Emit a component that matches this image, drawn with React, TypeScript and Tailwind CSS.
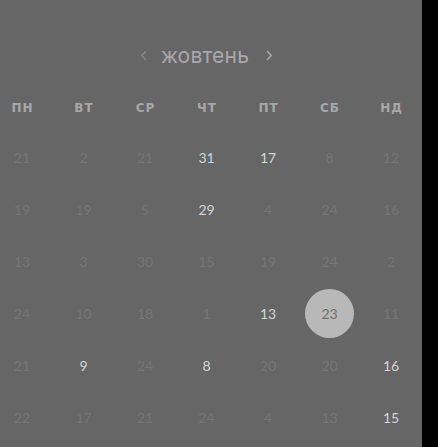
import React from "react";

type Day = { n: number; bright?: boolean; selected?: boolean };

const weekdays = ["пн", "вт", "ср", "чт", "пт", "сб", "нд"];

const d = (n: number, bright = false, selected = false): Day => ({ n, bright, selected });

const rows: Day[][] = [
  [d(21), d(2), d(21), d(31, true), d(17, true), d(8), d(12)],
  [d(19), d(19), d(5), d(29, true), d(4), d(24), d(16)],
  [d(13), d(3), d(30), d(15), d(19), d(24), d(2)],
  [d(24), d(10), d(18), d(1), d(13, true), d(23, false, true), d(11)],
  [d(21), d(9, true), d(24), d(8, true), d(20), d(20), d(16, true)],
  [d(22), d(17), d(21), d(24), d(4), d(13), d(15, true)],
];

const Chevron = ({ dir, className }: { dir: "left" | "right"; className?: string }) => (
  <svg width="7" height="11" viewBox="0 0 7 11" className={className} fill="none">
    <path
      d={dir === "left" ? "M5.5 1.5 L1.8 5.5 L5.5 9.5" : "M1.5 1.5 L5.2 5.5 L1.5 9.5"}
      stroke="currentColor"
      strokeWidth="1.5"
      strokeLinecap="round"
      strokeLinejoin="round"
    />
  </svg>
);

export default function App() {
  return (
    <div className="w-[438px] h-[447px] bg-black flex overflow-hidden">
      <div className="w-[422px] h-full bg-[#666666]">
        <div className="w-[413px]">
          <div className="mt-[41px] h-[28px] flex items-center justify-center">
            <Chevron dir="left" className="text-[#858585] mr-[14px]" />
            <span className="text-[21px] leading-none text-[#a9a9a9] font-['Inter',sans-serif] tracking-[0.2px]">
              жовтень
            </span>
            <Chevron dir="right" className="text-[#a8a8a8] ml-[17px]" />
          </div>
          <div className="mt-[29px] h-[20px] grid grid-cols-[repeat(7,44px)] gap-x-[17.5px]">
            {weekdays.map((w) => (
              <div
                key={w}
                className="flex items-center justify-center uppercase text-[12px] font-bold text-[#a8a8a8] tracking-[1px] pl-[1px] font-['DejaVu_Sans',sans-serif]"
              >
                {w}
              </div>
            ))}
          </div>
          <div className="mt-[13px] flex flex-col">
            {rows.map((row, i) => (
              <div key={i} className="h-[52px] grid grid-cols-[repeat(7,44px)] gap-x-[17.5px]">
                {row.map((day, j) => (
                  <div key={j} className="flex items-center justify-center">
                    {day.selected ? (
                      <div className="w-[49px] h-[49px] shrink-0 rounded-full bg-[#b8b8b8] flex items-center justify-center text-[14px] text-[#707070] font-['Lato',sans-serif]">
                        {day.n}
                      </div>
                    ) : (
                      <span
                        className={
                          "text-[14px] font-['Lato',sans-serif] " +
                          (day.bright ? "text-[#d4d4d4]" : "text-[#767676]")
                        }
                      >
                        {day.n}
                      </span>
                    )}
                  </div>
                ))}
              </div>
            ))}
          </div>
        </div>
      </div>
    </div>
  );
}
